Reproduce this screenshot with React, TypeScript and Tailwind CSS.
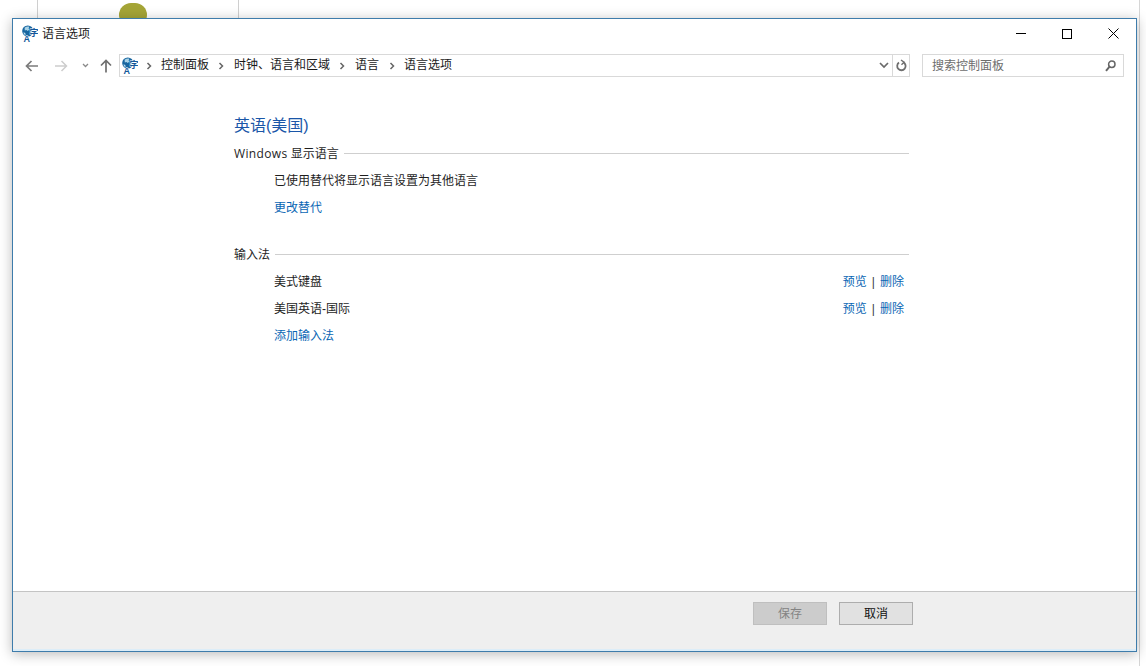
import type { ReactNode } from "react";

const FONT = "font-['Liberation_Sans','Noto_Sans_CJK_SC',sans-serif]";

function LangIcon({ className }: { className?: string }) {
  return (
    <svg width="16" height="20" viewBox="0 0 16 20" className={`mb-[-3px] ${className ?? ""}`}>
      <circle cx="5.8" cy="6" r="5.6" fill="#17659f" />
      <path d="M2.6 2.8 C4 1.6 6 1.2 7.4 1.8 L6.6 3.4 L7.4 4.6 L5.8 6 L4.4 5 L2.8 5.4 Z" fill="#a9d2e6" />
      <path d="M1.2 7.6 L3 7.8 L3.8 9.6 L2.8 10 Z" fill="#c4e0ee" />
      <text x="12" y="11" textAnchor="middle" fontSize="9" fontWeight="700" fill="#14589a" stroke="#fff" strokeWidth="0.8" paintOrder="stroke" fontFamily="Noto Sans CJK SC">字</text>
      <text x="4.8" y="16.6" textAnchor="middle" fontSize="9" fontWeight="700" fill="#14589a" stroke="#fff" strokeWidth="0.8" paintOrder="stroke" fontFamily="Liberation Sans">A</text>
    </svg>
  );
}

function Chevron() {
  return (
    <svg width="6" height="8" viewBox="0 0 6 8" fill="none" stroke="#666" strokeWidth="1.5">
      <path d="M1.5 1 L4.5 4 L1.5 7" />
    </svg>
  );
}

function SectionTitle({ children }: { children: ReactNode }) {
  return (
    <div className="flex items-center h-[18px] text-[12px] text-[#1e1e1e]">
      <span className="whitespace-nowrap pr-[5px]">{children}</span>
      <div className="flex-1 border-t border-[#cfcfcf] -mt-px" />
    </div>
  );
}

function ImeRow({ name }: { name: string }) {
  return (
    <div className="flex items-center justify-between h-[27px] pl-[40px] pr-[5px] text-[12px]">
      <span className="text-[#1e1e1e]">{name}</span>
      <span className="flex items-center text-[#0a66b4]">
        预览
        <span className="mx-[5px] text-[#3a3a3a]">|</span>
        删除
      </span>
    </div>
  );
}

export default function App() {
  return (
    <div className={`relative w-[1146px] h-[666px] overflow-hidden bg-white ${FONT}`}>
      {/* desktop behind the window */}
      <div className="absolute left-[37px] top-0 w-px h-[18px] bg-[#cfcfcf]" />
      <div className="absolute left-[238px] top-0 w-px h-[18px] bg-[#cfcfcf]" />
      <div className="absolute left-[119px] top-[3px] w-[28px] h-[24px] rounded-full bg-[#a5a537]" />
      <div className="absolute left-[1139px] top-0 w-px h-[666px] bg-[#d6d6d6]" />

      {/* window */}
      <div className="absolute left-[12px] top-[18px] w-[1125px] h-[634px] flex flex-col bg-white border border-[#3e7cab] shadow-[0_2px_12px_rgba(0,0,0,0.28)]">
        {/* title bar */}
        <div className="flex items-center h-[29px] pl-[9px] shrink-0">
          <LangIcon />
          <span className="ml-[4px] text-[12px] text-[#1a1a1a]">语言选项</span>
          <div className="ml-auto flex items-center">
            <div className="w-[46px] h-[29px] flex items-center justify-center">
              <div className="w-[10px] h-px bg-black" />
            </div>
            <div className="w-[46px] h-[29px] flex items-center justify-center">
              <div className="w-[10px] h-[10px] border border-black" />
            </div>
            <div className="w-[46px] h-[29px] flex items-center justify-center">
              <svg width="11" height="11" viewBox="0 0 11 11" stroke="#000" strokeWidth="1">
                <path d="M0.5 0.5 L10.5 10.5 M10.5 0.5 L0.5 10.5" />
              </svg>
            </div>
          </div>
        </div>

        {/* nav bar */}
        <div className="flex items-center h-[23px] mt-[6px] shrink-0">
          <svg width="14" height="12" viewBox="0 0 14 12" fill="none" stroke="#7b7b7b" strokeWidth="1.7" className="ml-[12px]">
            <path d="M13 6 H1.5 M6.5 1 L1.5 6 L6.5 11" />
          </svg>
          <svg width="14" height="12" viewBox="0 0 14 12" fill="none" stroke="#cdcdcd" strokeWidth="1.5" className="ml-[15px]">
            <path d="M1 6 H12.5 M7.5 1 L12.5 6 L7.5 11" />
          </svg>
          <svg width="7" height="5" viewBox="0 0 7 5" fill="none" stroke="#8a8a8a" strokeWidth="1.3" className="ml-[14px]">
            <path d="M1 1 L3.5 3.5 L6 1" />
          </svg>
          <svg width="12" height="14" viewBox="0 0 12 14" fill="none" stroke="#6f6f6f" strokeWidth="1.7" className="ml-[11px]">
            <path d="M6 13.5 V1.5 M1 6.5 L6 1.5 L11 6.5" />
          </svg>

          {/* address box */}
          <div className="ml-[7px] w-[791px] h-[23px] flex items-center border border-[#d9d9d9] text-[12px] text-[#1a1a1a]">
            <LangIcon className="ml-[2px] shrink-0" />
            <span className="ml-[8px] flex"><Chevron /></span>
            <span className="ml-[9px] whitespace-nowrap pb-[2px]">控制面板</span>
            <span className="ml-[9px] flex"><Chevron /></span>
            <span className="ml-[10px] whitespace-nowrap pb-[2px]">时钟、语言和区域</span>
            <span className="ml-[9px] flex"><Chevron /></span>
            <span className="ml-[10px] whitespace-nowrap pb-[2px]">语言</span>
            <span className="ml-[10px] flex"><Chevron /></span>
            <span className="ml-[9px] whitespace-nowrap pb-[2px]">语言选项</span>
            <div className="ml-auto flex items-center h-full">
              <svg width="10" height="7" viewBox="0 0 10 7" fill="none" stroke="#6a6a6a" strokeWidth="1.7" className="mr-[3px]">
                <path d="M1 1 L5 5 L9 1" />
              </svg>
              <div className="w-[17px] h-full border-l border-[#d9d9d9] flex items-center justify-center">
                <svg width="11" height="13" viewBox="0 0 11 13" fill="none" stroke="#6f6f6f" strokeWidth="1.8">
                  <path d="M7.5 3.4 A4.2 4.2 0 1 1 3 3.6" />
                  <path d="M5 1 L8 3.2 L5.5 5.8" strokeWidth="1.4" />
                </svg>
              </div>
            </div>
          </div>

          {/* search box */}
          <div className="ml-[12px] w-[202px] h-[23px] flex items-center justify-between border border-[#d9d9d9] pl-[9px] pr-[7px] text-[12px] text-[#6d6d6d]">
            <span>搜索控制面板</span>
            <svg width="11" height="12" viewBox="0 0 11 12" fill="none" stroke="#666" strokeWidth="1.5">
              <circle cx="6.8" cy="4.2" r="3.2" />
              <path d="M4.6 6.6 L1 10.8" strokeWidth="2" />
            </svg>
          </div>
        </div>

        {/* content */}
        <div className="flex-1 pl-[221px] pr-[227px] pt-[37px]">
          <div className="h-[24px] text-[16px] leading-[24px] text-[#1a56a8]">英语(美国)</div>
          <div className="mt-[7px]">
            <SectionTitle>
              <span className="font-['Open_Sans',sans-serif] tracking-[0.35px]">Windows</span> 显示语言
            </SectionTitle>
          </div>
          <div className="mt-[9px] pl-[40px] h-[18px] text-[12px] leading-[18px] text-[#1e1e1e]">已使用替代将显示语言设置为其他语言</div>
          <div className="mt-[9px] pl-[40px] h-[18px] text-[12px] leading-[18px] text-[#0a66b4]">更改替代</div>
          <div className="mt-[29px]"><SectionTitle>输入法</SectionTitle></div>
          <div className="mt-[4px]">
            <ImeRow name="美式键盘" />
            <ImeRow name="美国英语-国际" />
          </div>
          <div className="mt-[5px] pl-[40px] h-[18px] text-[12px] leading-[18px] text-[#0a66b4]">添加输入法</div>
        </div>

        {/* footer */}
        <div className="h-[60px] shrink-0 bg-[#efefef] border-t border-[#c4c4c4] flex justify-end pt-[10px] pr-[223px] gap-[12px] text-[12px] border-b-[2px] border-b-[#dcedf8]">
          <div className="w-[74px] h-[23px] flex items-center justify-center bg-[#cccccc] border border-[#bfbfbf] text-[#838383]">保存</div>
          <div className="w-[74px] h-[23px] flex items-center justify-center bg-[#e1e1e1] border border-[#adadad] text-[#111]">取消</div>
        </div>
      </div>
    </div>
  );
}
